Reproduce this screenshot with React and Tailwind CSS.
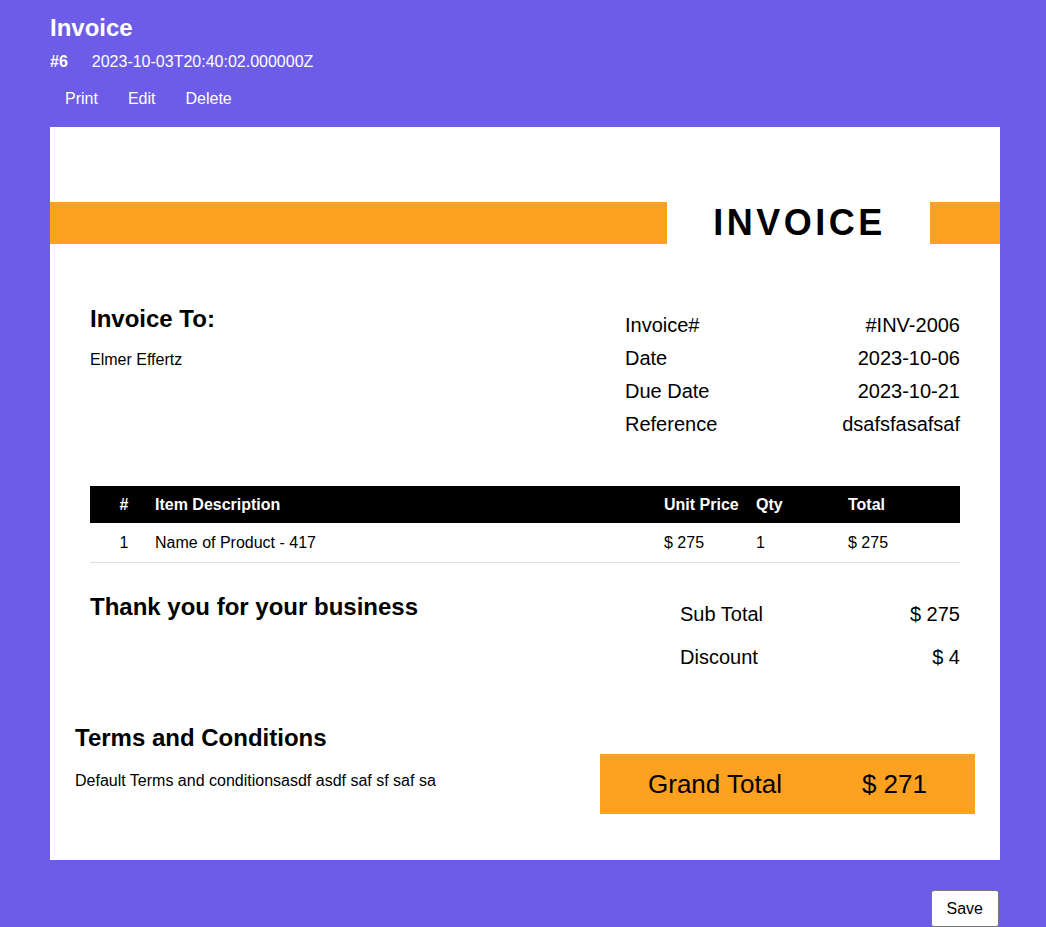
import React from "react";

const orange = "bg-[#fca120]";

export default function App() {
  return (
    <div className="min-h-screen bg-[#6c5ce7] pl-[50px] pr-[46px] pt-[14px] pb-0 text-black" style={{ fontFamily: '"Liberation Sans", Arial, sans-serif' }}>
      <h1 className="text-[24px] leading-[28px] font-bold text-white">Invoice</h1>
      <div className="mt-[10px] flex items-center text-[16px] leading-[20px] text-white">
        <span className="font-bold">#6</span>
        <span className="ml-[24px]">2023-10-03T20:40:02.000000Z</span>
      </div>
      <div className="mt-[11px] flex text-[16px] leading-[20px] text-white">
        <button className="px-[15px] py-[6px]">Print</button>
        <button className="px-[15px] py-[6px]">Edit</button>
        <button className="px-[15px] py-[6px]">Delete</button>
      </div>
      <div className="mt-[12px] bg-white h-[733px] pt-[75px]">
        <div className="flex h-[42px]">
          <div className={`flex-1 ${orange}`}></div>
          <div className="w-[263px] flex items-center justify-center text-[36px] font-bold tracking-[3.5px] leading-none pl-[2px]">INVOICE</div>
          <div className={`w-[70px] ${orange}`}></div>
        </div>
        <div className="px-[40px]">
          <div className="mt-[61px] flex justify-between">
            <div>
              <div className="text-[24px] leading-[28px] font-bold">Invoice To:</div>
              <div className="mt-[17px] text-[16px] leading-[20px]">Elmer Effertz</div>
            </div>
            <div className="w-[335px] mt-[4px] text-[20px] leading-[33px]">
              <div className="flex justify-between"><span>Invoice#</span><span>#INV-2006</span></div>
              <div className="flex justify-between"><span>Date</span><span>2023-10-06</span></div>
              <div className="flex justify-between"><span>Due Date</span><span>2023-10-21</span></div>
              <div className="flex justify-between"><span>Reference</span><span>dsafsfasafsaf</span></div>
            </div>
          </div>
          <table className="mt-[45px] w-full text-[16px] text-left border-collapse">
            <thead>
              <tr className="bg-black text-white h-[37px]">
                <th className="w-[65px] text-center font-bold pl-[3px]">#</th>
                <th className="font-bold">Item Description</th>
                <th className="w-[92px] font-bold">Unit Price</th>
                <th className="w-[92px] font-bold">Qty</th>
                <th className="w-[112px] font-bold">Total</th>
              </tr>
            </thead>
            <tbody>
              <tr className="h-[39px] border-b border-[#dedede]">
                <td className="text-center pl-[3px] pt-[2px]">1</td>
                <td className="pt-[2px]">Name of Product - 417</td>
                <td className="pt-[2px]">$ 275</td>
                <td className="pt-[2px]">1</td>
                <td className="pt-[2px]">$ 275</td>
              </tr>
            </tbody>
          </table>
          <div className="mt-[30px] flex justify-between">
            <div className="text-[24px] leading-[28px] font-bold">Thank you for your business</div>
            <div className="w-[280px] mt-[9px] text-[20px] leading-[24px]">
              <div className="flex justify-between"><span>Sub Total</span><span>$ 275</span></div>
              <div className="mt-[19px] flex justify-between"><span>Discount</span><span>$ 4</span></div>
            </div>
          </div>
        </div>
        <div className="px-[25px] mt-[55px] flex justify-between">
          <div>
            <div className="text-[24px] leading-[28px] font-bold">Terms and Conditions</div>
            <div className="mt-[19px] text-[16px] leading-[20px]">Default Terms and conditionsasdf asdf saf sf saf sa</div>
          </div>
          <div className={`mt-[30px] w-[375px] h-[60px] ${orange} flex items-center text-[26px] pt-[1px]`}>
            <span className="ml-[48px]">Grand Total</span>
            <span className="ml-[80px]">$ 271</span>
          </div>
        </div>
      </div>
      <div className="mt-[30px] flex justify-end">
        <button className="bg-white border border-[#767676] rounded-[3px] px-[15px] h-[37px] text-[16px] mr-[1px]">Save</button>
      </div>
    </div>
  );
}
